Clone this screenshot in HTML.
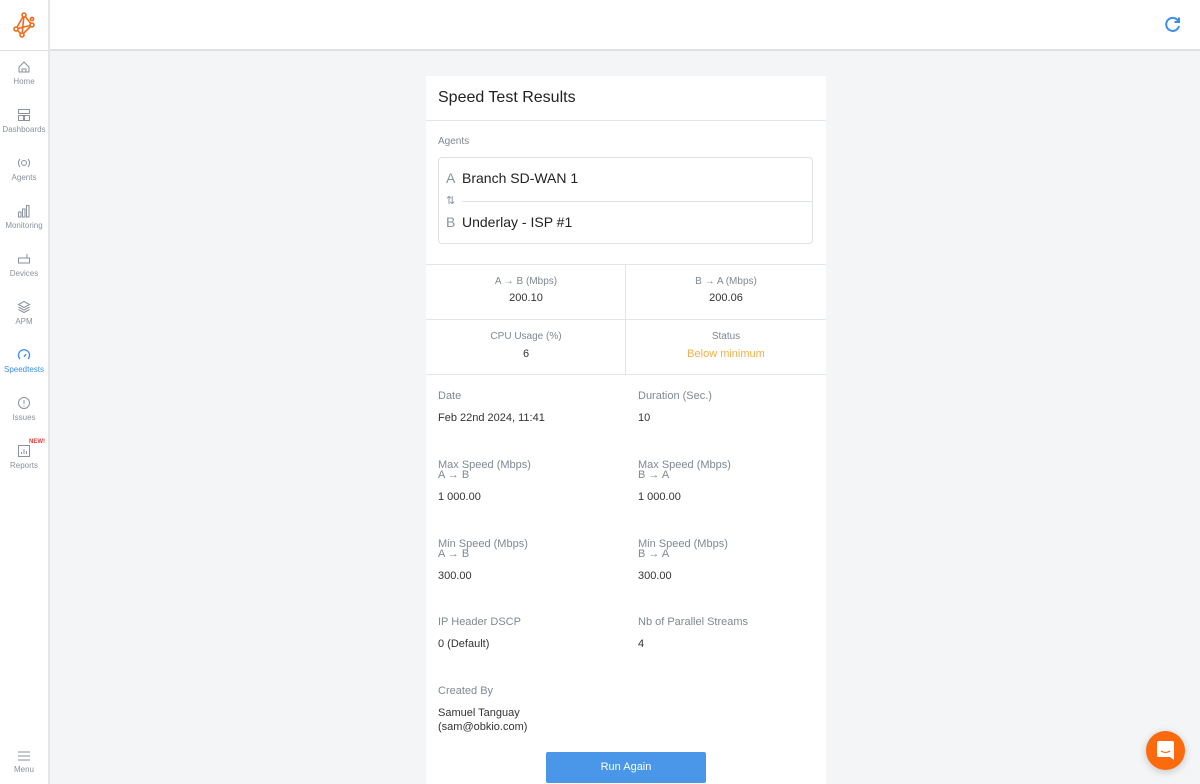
<!DOCTYPE html>
<html><head><meta charset="utf-8"><style>
*{box-sizing:border-box;margin:0;padding:0}
html{width:1200px;height:784px;overflow:hidden}
body{width:1200px;height:784px;overflow:hidden;background:#f4f5f6;font-family:"Liberation Sans",sans-serif;position:relative;color:#222}
.side{position:absolute;left:0;top:0;width:50px;height:784px;background:#fff;border-right:2px solid #e4e6e8}
.logo{height:51px;border-bottom:1px solid #dcdfe2;display:flex;align-items:center;justify-content:center}
.it{position:absolute;left:0;width:48px;text-align:center;font-size:8px;color:#8a929c}
.it svg{display:block;margin:0 auto 3px}
.top{position:absolute;left:50px;top:0;right:0;height:51px;background:#fff;border-bottom:2px solid #dfe1e3}
.card{position:absolute;left:426px;top:76px;width:400px;height:708px;background:#fff}
.abs{position:absolute}
.lbl{font-size:11px;color:#7f8893}
.val{font-size:11px;color:#333}
.hr{position:absolute;left:0;right:0;height:1px;background:#e3e6e9}
.c{position:absolute;text-align:center;width:200px}
</style></head><body>
<div class="side">
 <div class="logo"><svg width="26" height="26" viewBox="0 0 26 26" fill="none" stroke="#f26b1d" stroke-width="1.6"><path d="M13 3 L5 17 L11 23 L21 13 Z M13 3 L11 23 M5 17 L21 13 M13 3 L21 13"/><circle cx="13" cy="3" r="2" fill="#fff"/><circle cx="5" cy="17" r="2" fill="#fff"/><circle cx="11" cy="23" r="2" fill="#fff"/><circle cx="21" cy="13" r="2" fill="#fff"/><circle cx="21" cy="7" r="1.6" fill="#fff"/></svg></div>
 <div class="it" style="top:60px"><svg width="14" height="14" viewBox="0 0 14 14" fill="none" stroke="#8a929c"><path d="M2 7 L7 2 L12 7 V12 H2 Z M5 12 V9 H9 V12"/></svg>Home</div>
 <div class="it" style="top:108px"><svg width="14" height="14" viewBox="0 0 14 14" fill="none" stroke="#8a929c"><rect x="1.5" y="1.5" width="11" height="4"/><rect x="1.5" y="7.5" width="5" height="5"/><rect x="7.5" y="7.5" width="5" height="5"/></svg>Dashboards</div>
 <div class="it" style="top:156px"><svg width="14" height="14" viewBox="0 0 14 14" fill="none" stroke="#8a929c"><circle cx="7" cy="7" r="2.5"/><path d="M3 3 A6 6 0 0 0 3 11 M11 3 A6 6 0 0 1 11 11"/></svg>Agents</div>
 <div class="it" style="top:204px"><svg width="14" height="14" viewBox="0 0 14 14" fill="none" stroke="#8a929c"><rect x="1.5" y="8" width="2.5" height="5"/><rect x="5.5" y="5" width="2.5" height="8"/><rect x="9.5" y="1.5" width="2.5" height="11.5"/></svg>Monitoring</div>
 <div class="it" style="top:252px"><svg width="14" height="14" viewBox="0 0 14 14" fill="none" stroke="#8a929c"><rect x="1.5" y="6" width="11" height="5"/><path d="M10 6 V2"/></svg>Devices</div>
 <div class="it" style="top:300px"><svg width="14" height="14" viewBox="0 0 14 14" fill="none" stroke="#8a929c"><path d="M7 1.5 L12.5 4.5 L7 7.5 L1.5 4.5 Z M1.5 7 L7 10 L12.5 7 M1.5 9.5 L7 12.5 L12.5 9.5"/></svg>APM</div>
 <div class="it" style="top:348px;color:#3d8ee8"><svg width="14" height="14" viewBox="0 0 14 14" fill="none" stroke="#3d8ee8" stroke-width="1.3"><path d="M3 11 A5.5 5.5 0 1 1 11 11 M7 9 L9 6"/></svg>Speedtests</div>
 <div class="it" style="top:396px"><svg width="14" height="14" viewBox="0 0 14 14" fill="none" stroke="#8a929c"><circle cx="7" cy="7" r="5.5"/><path d="M7 4 V8 M7 9.5 V10.5"/></svg>Issues</div>
 <div class="it" style="top:444px"><svg width="14" height="14" viewBox="0 0 14 14" fill="none" stroke="#8a929c"><rect x="1.5" y="1.5" width="11" height="11"/><path d="M4.5 10 V8 M7 10 V5 M9.5 10 V7"/></svg>Reports</div>
 <div class="abs" style="left:29px;top:439px;font-size:6px;color:#e53935;font-weight:bold">NEW!</div>
 <div class="it" style="top:750px"><svg width="14" height="12" viewBox="0 0 14 12" stroke="#8a929c"><path d="M1 2H13M1 6H13M1 10H13"/></svg>Menu</div>
</div>
<div class="top"><svg class="abs" style="left:1114px;top:15px" width="18" height="18" viewBox="0 0 18 18" fill="none" stroke="#3d8ee8" stroke-width="2"><path d="M14.5 6.5 A6.5 6.5 0 1 0 15 11"/><path d="M15 2.5 V7 H10.5" /></svg></div>
<div class="card">
 <div class="abs" style="left:12px;top:13px;font-size:16px;color:#222">Speed Test Results</div>
 <div class="hr" style="top:44px"></div>
 <div class="abs lbl" style="left:12px;top:60px;font-size:10px">Agents</div>
 <div class="abs" style="left:12px;top:81px;width:375px;height:87px;border:1px solid #dfe2e6;border-radius:4px">
  <div class="abs" style="left:7px;top:12px;font-size:14px;color:#8a929c">A</div>
  <div class="abs" style="left:23px;top:12px;font-size:14px">Branch SD-WAN 1</div>
  <div class="abs" style="left:7px;top:36px;font-size:11px;color:#8a929c">⇅</div>
  <div class="abs" style="left:23px;top:43px;right:0;height:1px;background:#dfe2e6"></div>
  <div class="abs" style="left:7px;top:56px;font-size:14px;color:#8a929c">B</div>
  <div class="abs" style="left:23px;top:56px;font-size:14px">Underlay - ISP #1</div>
 </div>
 <div class="hr" style="top:188px"></div>
 <div class="hr" style="top:243px"></div>
 <div class="hr" style="top:298px"></div>
 <div class="abs" style="left:199px;top:188px;width:1px;height:110px;background:#e3e6e9"></div>
 <div class="c lbl" style="left:0;top:200px;font-size:10px">A → B (Mbps)</div>
 <div class="c val" style="left:0;top:216px">200.10</div>
 <div class="c lbl" style="left:200px;top:200px;font-size:10px">B → A (Mbps)</div>
 <div class="c val" style="left:200px;top:216px">200.06</div>
 <div class="c lbl" style="left:0;top:255px;font-size:10px">CPU Usage (%)</div>
 <div class="c val" style="left:0;top:272px">6</div>
 <div class="c lbl" style="left:200px;top:255px;font-size:10px">Status</div>
 <div class="c val" style="left:200px;top:272px;color:#f0b049">Below minimum</div>

 <div class="abs lbl" style="left:12px;top:314px">Date</div>
 <div class="abs val" style="left:12px;top:336px">Feb 22nd 2024, 11:41</div>
 <div class="abs lbl" style="left:212px;top:314px">Duration (Sec.)</div>
 <div class="abs val" style="left:212px;top:336px">10</div>

 <div class="abs lbl" style="left:12px;top:384px;line-height:10px">Max Speed (Mbps)<br>A → B</div>
 <div class="abs val" style="left:12px;top:415px">1 000.00</div>
 <div class="abs lbl" style="left:212px;top:384px;line-height:10px">Max Speed (Mbps)<br>B → A</div>
 <div class="abs val" style="left:212px;top:415px">1 000.00</div>

 <div class="abs lbl" style="left:12px;top:463px;line-height:10px">Min Speed (Mbps)<br>A → B</div>
 <div class="abs val" style="left:12px;top:494px">300.00</div>
 <div class="abs lbl" style="left:212px;top:463px;line-height:10px">Min Speed (Mbps)<br>B → A</div>
 <div class="abs val" style="left:212px;top:494px">300.00</div>

 <div class="abs lbl" style="left:12px;top:540px">IP Header DSCP</div>
 <div class="abs val" style="left:12px;top:562px">0 (Default)</div>
 <div class="abs lbl" style="left:212px;top:540px">Nb of Parallel Streams</div>
 <div class="abs val" style="left:212px;top:562px">4</div>

 <div class="abs lbl" style="left:12px;top:609px">Created By</div>
 <div class="abs val" style="left:12px;top:630px;line-height:14px">Samuel Tanguay<br>(sam@obkio.com)</div>

 <div class="abs" style="left:120px;top:676px;width:160px;height:31px;background:#4a97ea;border-radius:2px;color:#fff;font-size:11px;text-align:center;line-height:31px">Run Again</div>
</div>
<div class="abs" style="left:1146px;top:731px;width:39px;height:39px;border-radius:50%;background:#fb6a0c;box-shadow:0 2px 8px rgba(0,0,0,.2)">
 <svg class="abs" style="left:11px;top:10px" width="17" height="19" viewBox="0 0 17 19"><path d="M2 0 H15 A2 2 0 0 1 17 2 V19 L13 16 H2 A2 2 0 0 1 0 14 V2 A2 2 0 0 1 2 0Z" fill="#fff"/><path d="M4 10 Q8.5 13 13 10" stroke="#fb6a0c" stroke-width="1.3" fill="none"/></svg>
</div>
</body></html>
